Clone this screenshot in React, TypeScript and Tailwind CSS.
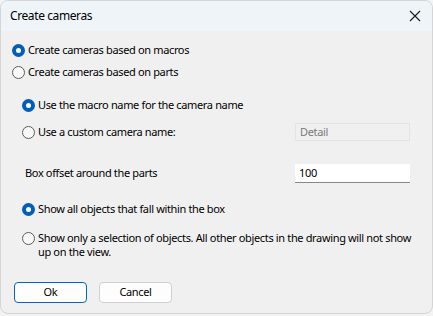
import React, { useState } from "react";

function Radio({ checked, onClick }: { checked: boolean; onClick: () => void }) {
  return (
    <span
      onClick={onClick}
      className={
        checked
          ? "w-[13px] h-[13px] rounded-full bg-[#005fb8] flex items-center justify-center shrink-0"
          : "w-[13px] h-[13px] rounded-full border border-[#5d5d5d] bg-[#f7f7f7] shrink-0"
      }
    >
      {checked && <span className="w-[5px] h-[5px] rounded-full bg-white" />}
    </span>
  );
}

export default function App() {
  const [basis, setBasis] = useState("macros");
  const [naming, setNaming] = useState("macro");
  const [show, setShow] = useState("all");

  return (
    <div
      className="w-[433px] h-[316px] bg-[#f3f3f3] text-[11px] tracking-[-0.35px] text-black overflow-hidden"
      style={{ fontFamily: '"Segoe UI", "Noto Sans", sans-serif' }}
    >
      <div className="w-[433px] h-[314px] rounded-[8px] border border-[#d5d5d5] bg-[#f0f0f0] overflow-hidden flex flex-col">
        {/* Title bar */}
        <div className="h-[30px] bg-[#eff4f9] flex items-center justify-between pl-[9px] pr-[10px] shrink-0">
          <span className="text-[12px] tracking-[-0.4px]">Create cameras</span>
          <svg width="12" height="12" viewBox="0 0 12 12" className="mr-[1px]">
            <path d="M1 1 L11 11 M11 1 L1 11" stroke="#1a1a1a" strokeWidth="1.1" />
          </svg>
        </div>

        <div className="pl-[11px] pr-[22px] pt-[11px] flex flex-col">
          <label className="flex items-center gap-[3px] h-[16px]">
            <Radio checked={basis === "macros"} onClick={() => setBasis("macros")} />
            <span>Create cameras based on macros</span>
          </label>
          <label className="flex items-center gap-[3px] h-[16px] mt-[6px]">
            <Radio checked={basis === "parts"} onClick={() => setBasis("parts")} />
            <span>Create cameras based on parts</span>
          </label>

          <div className="pl-[10px] mt-[17px] flex flex-col">
            <label className="flex items-center gap-[3px] h-[16px]">
              <Radio checked={naming === "macro"} onClick={() => setNaming("macro")} />
              <span>Use the macro name for the camera name</span>
            </label>
            <div className="flex items-center justify-between mt-[10px]">
              <label className="flex items-center gap-[3px] h-[16px]">
                <Radio checked={naming === "custom"} onClick={() => setNaming("custom")} />
                <span>Use a custom camera name:</span>
              </label>
              <div className="w-[115px] h-[18px] border border-[#e4e4e4] bg-[#f0f0f0] text-[#7a7a7a] px-[4px] flex items-center">
                Detail
              </div>
            </div>

            <div className="flex items-center justify-between mt-[23px] pl-[3px]">
              <span>Box offset around the parts</span>
              <div className="w-[115px] h-[19px] bg-white border-b border-[#878787] px-[4px] flex items-center">
                100
              </div>
            </div>

            <label className="flex items-center gap-[3px] h-[16px] mt-[18px]">
              <Radio checked={show === "all"} onClick={() => setShow("all")} />
              <span>Show all objects that fall within the box</span>
            </label>
            <label className="flex items-start gap-[3px] mt-[14px] mr-[-14px]">
              <span className="flex shrink-0 pt-[1px]">
                <Radio checked={show === "sel"} onClick={() => setShow("sel")} />
              </span>
              <span className="leading-[14px]">
                Show only a selection of objects. All other objects in the drawing will not show up on the view.
              </span>
            </label>
          </div>

          <div className="flex gap-[12px] mt-[23px] pl-[2px]">
            <button className="w-[73px] h-[21px] rounded-[4px] border border-[#0067c0] bg-[#fdfdfd] text-[11px] tracking-[-0.35px]">
              Ok
            </button>
            <button className="w-[73px] h-[21px] rounded-[4px] border border-[#d0d0d0] bg-[#fdfdfd] text-[11px] tracking-[-0.35px]">
              Cancel
            </button>
          </div>
        </div>
      </div>
    </div>
  );
}
